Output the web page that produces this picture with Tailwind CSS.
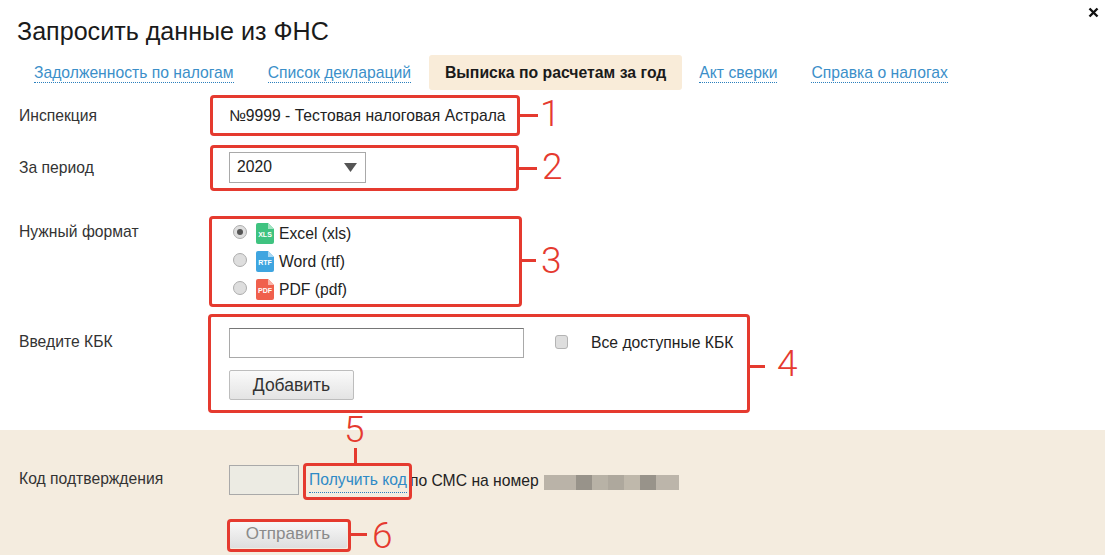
<!DOCTYPE html>
<html lang="ru">

<head>
    <meta charset="UTF-8">
    <title>Запросить данные из ФНС</title>
    <script src="https://cdn.jsdelivr.net/npm/@tailwindcss/browser@4"></script>
</head>

<body class="bg-white">
    <div class="relative w-[1105px] h-[555px] overflow-hidden font-['Liberation_Sans',Arial,sans-serif] text-[15.7px] text-[#333]">
        <!-- close -->
        <svg class="absolute left-[1088px] top-[7px]" width="11" height="11" viewBox="0 0 11 11">
            <path d="M1.5 1.5l8 8M9.5 1.5l-8 8" stroke="#111" stroke-width="2.4" fill="none" />
        </svg>

        <div class="h-[430px] flex flex-col">
            <h1 class="pl-[17px] pt-[16px] h-[55px] text-[25.1px] leading-[30px] text-[#1a1a1a]">Запросить данные из ФНС</h1>

            <!-- tabs -->
            <div class="flex items-start pl-[17px] leading-[35px] h-[35px]">
                <a class="px-[17px] h-[35px] text-[#3b8fc9]"><span class="border-b border-dotted border-[#2a7fbd] pb-px">Задолженность по налогам</span></a>
                <a class="pl-[17px] pr-[18px] h-[35px] text-[#3b8fc9]"><span class="border-b border-dotted border-[#2a7fbd] pb-px">Список деклараций</span></a>
                <a class="px-[16px] h-[35px] bg-[#f9ecd9] rounded-[3px] font-bold text-[#1a1a1a] text-[15.8px]">Выписка по расчетам за год</a>
                <a class="px-[17px] h-[35px] text-[#3b8fc9]"><span class="border-b border-dotted border-[#2a7fbd] pb-px">Акт сверки</span></a>
                <a class="px-[17px] h-[35px] text-[#3b8fc9]"><span class="border-b border-dotted border-[#2a7fbd] pb-px">Справка о налогах</span></a>
            </div>

            <!-- inspection -->
            <div class="flex pl-[19px] h-[50px] items-center pt-[1px]">
                <div class="w-[210px]">Инспекция</div>
                <div class="text-[#222]">№9999 - Тестовая налоговая Астрала</div>
            </div>

            <!-- period -->
            <div class="flex pl-[19px] h-[54px] items-center">
                <div class="w-[210px] pt-[2px]">За период</div>
                <div class="w-[137px] h-[31px] border border-[#a9a9a9] bg-white flex items-center justify-between pl-[7px] pr-[8px] text-[#222]">
                    <span class="pb-[1px]">2020</span>
                    <svg width="13" height="9" viewBox="0 0 13 9"><path d="M0 0h13L6.5 9z" fill="#555" /></svg>
                </div>
            </div>

            <!-- format -->
            <div class="flex pl-[19px] mt-[26px] h-[84px]">
                <div class="w-[210px]">Нужный формат</div>
                <div class="flex flex-col">
                    <label class="flex items-center h-[28px]">
                        <span class="w-[14px] h-[14px] ml-[4px] mb-[4px] rounded-full bg-[#dedede] border border-[#adadad] flex items-center justify-center"><span class="w-[6px] h-[6px] rounded-full bg-[#555]"></span></span>
                        <svg class="ml-[9px] mr-[5px] mb-[2px]" width="18" height="21" viewBox="0 0 18 21"><path d="M2 0h10l6 6v13a2 2 0 0 1-2 2H2a2 2 0 0 1-2-2V2a2 2 0 0 1 2-2z" fill="#3fc380" /><path d="M12 0l6 6h-6z" fill="#a4e3c3" /><text x="9" y="14" text-anchor="middle" font-size="7" font-weight="700" fill="#fff">XLS</text></svg>
                        <span class="text-[#222]">Excel (xls)</span>
                    </label>
                    <label class="flex items-center h-[28px]">
                        <span class="w-[14px] h-[14px] ml-[4px] mb-[4px] rounded-full bg-[#dedede] border border-[#adadad]"></span>
                        <svg class="ml-[9px] mr-[5px] mb-[2px]" width="18" height="21" viewBox="0 0 18 21"><path d="M2 0h10l6 6v13a2 2 0 0 1-2 2H2a2 2 0 0 1-2-2V2a2 2 0 0 1 2-2z" fill="#3fa5e0" /><path d="M12 0l6 6h-6z" fill="#a9d8f3" /><text x="9" y="14" text-anchor="middle" font-size="7" font-weight="700" fill="#fff">RTF</text></svg>
                        <span class="text-[#222]">Word (rtf)</span>
                    </label>
                    <label class="flex items-center h-[28px]">
                        <span class="w-[14px] h-[14px] ml-[4px] mb-[4px] rounded-full bg-[#dedede] border border-[#adadad]"></span>
                        <svg class="ml-[9px] mr-[5px] mb-[2px]" width="18" height="21" viewBox="0 0 18 21"><path d="M2 0h10l6 6v13a2 2 0 0 1-2 2H2a2 2 0 0 1-2-2V2a2 2 0 0 1 2-2z" fill="#f0604d" /><path d="M12 0l6 6h-6z" fill="#f9b5aa" /><text x="9" y="14" text-anchor="middle" font-size="7" font-weight="700" fill="#fff">PDF</text></svg>
                        <span class="text-[#222]">PDF (pdf)</span>
                    </label>
                </div>
            </div>

            <!-- kbk -->
            <div class="flex pl-[19px] pt-[24px]">
                <div class="w-[210px] pt-[2px]">Введите КБК</div>
                <div>
                    <div class="flex items-center h-[30px]">
                        <div class="w-[295px] h-[30px] border border-[#a9a9a9] border-t-[#767676] bg-white"></div>
                        <span class="ml-[31px] mb-[2px] w-[13px] h-[14px] rounded-[3px] bg-[#dedede] border border-[#b4b4b4]"></span>
                        <span class="ml-[23px] mb-[1px] text-[#222]">Все доступные КБК</span>
                    </div>
                    <button class="mt-[12px] w-[125px] h-[30px] border border-[#bdbdbd] rounded-[2px] bg-gradient-to-b from-[#fafafa] to-[#e4e4e4] text-[#333] text-[17.5px]">Добавить</button>
                </div>
            </div>
        </div>

        <!-- confirm -->
        <div class="h-[125px] bg-[#f4ecdf] pl-[19px] pt-[35px]">
            <div class="flex items-center h-[30px]">
                <div class="w-[210px] pb-[3px]">Код подтверждения</div>
                <div class="w-[70px] h-[30px] border border-[#a9a9a9] bg-[#ecebe3]"></div>
                <a class="ml-[10px] mt-[1px] text-[#2f8ac6] border-b border-dotted border-[#2a7fbd]">Получить код</a>
                <span class="ml-[3px] mt-[2px] text-[#222]">по СМС на номер</span>
                <div class="ml-[5px] mt-[4px] flex h-[15px]">
                    <i class="w-[32px] bg-[#bab3a8]"></i><i class="w-[16px] bg-[#98938a]"></i><i class="w-[16px] bg-[#b8b2a6]"></i><i class="w-[16px] bg-[#aea89d]"></i><i class="w-[16px] bg-[#bfb8ab]"></i><i class="w-[16px] bg-[#98938a]"></i><i class="w-[23px] bg-[#bcb5aa]"></i>
                </div>
            </div>
            <button class="mt-[25px] ml-[210px] w-[118px] h-[28px] rounded-[2px] bg-gradient-to-b from-[#fafafa] to-[#dedede] text-[#8a8a8a] text-[17px]">Отправить</button>
        </div>

        <!-- annotations -->
        <div class="absolute left-[210px] top-[95px] w-[310px] h-[41px] border-[3px] border-[#e53a2f] rounded-[4px]"></div>
        <div class="absolute left-[210px] top-[145px] w-[309px] h-[46px] border-[3px] border-[#e53a2f] rounded-[4px]"></div>
        <div class="absolute left-[209px] top-[216px] w-[313px] h-[91px] border-[3px] border-[#e53a2f] rounded-[4px]"></div>
        <div class="absolute left-[208px] top-[314px] w-[542px] h-[99px] border-[3px] border-[#e53a2f] rounded-[4px]"></div>
        <div class="absolute left-[303px] top-[463px] w-[109px] h-[37px] border-[3px] border-[#e53a2f] rounded-[4px]"></div>
        <div class="absolute left-[227px] top-[519px] w-[124px] h-[33px] border-[3px] border-[#e53a2f] rounded-[4px]"></div>

        <div class="absolute left-[520px] top-[114px] w-[18px] h-[3px] bg-[#e53a2f]"></div>
        <div class="absolute left-[519px] top-[167px] w-[18px] h-[3px] bg-[#e53a2f]"></div>
        <div class="absolute left-[522px] top-[259px] w-[14px] h-[3px] bg-[#e53a2f]"></div>
        <div class="absolute left-[750px] top-[365px] w-[15px] h-[3px] bg-[#e53a2f]"></div>
        <div class="absolute left-[354px] top-[448px] w-[3px] h-[15px] bg-[#e53a2f]"></div>
        <div class="absolute left-[351px] top-[533px] w-[16px] h-[3px] bg-[#e53a2f]"></div>

        <div class="absolute left-[540px] top-[94px] font-['Roboto'] font-light text-[37px] leading-[40px] text-[#e53a2f]">1</div>
        <div class="absolute left-[542px] top-[147px] font-['Roboto'] font-light text-[37px] leading-[40px] text-[#e53a2f]">2</div>
        <div class="absolute left-[541px] top-[241px] font-['Roboto'] font-light text-[37px] leading-[40px] text-[#e53a2f]">3</div>
        <div class="absolute left-[777px] top-[344px] font-['Roboto'] font-light text-[37px] leading-[40px] text-[#e53a2f]">4</div>
        <div class="absolute left-[344px] top-[410px] font-['Roboto'] font-light text-[37px] leading-[40px] text-[#e53a2f]">5</div>
        <div class="absolute left-[372px] top-[517px] font-['Roboto'] font-light text-[37px] leading-[38px] text-[#e53a2f]">6</div>
    </div>
</body>

</html>
